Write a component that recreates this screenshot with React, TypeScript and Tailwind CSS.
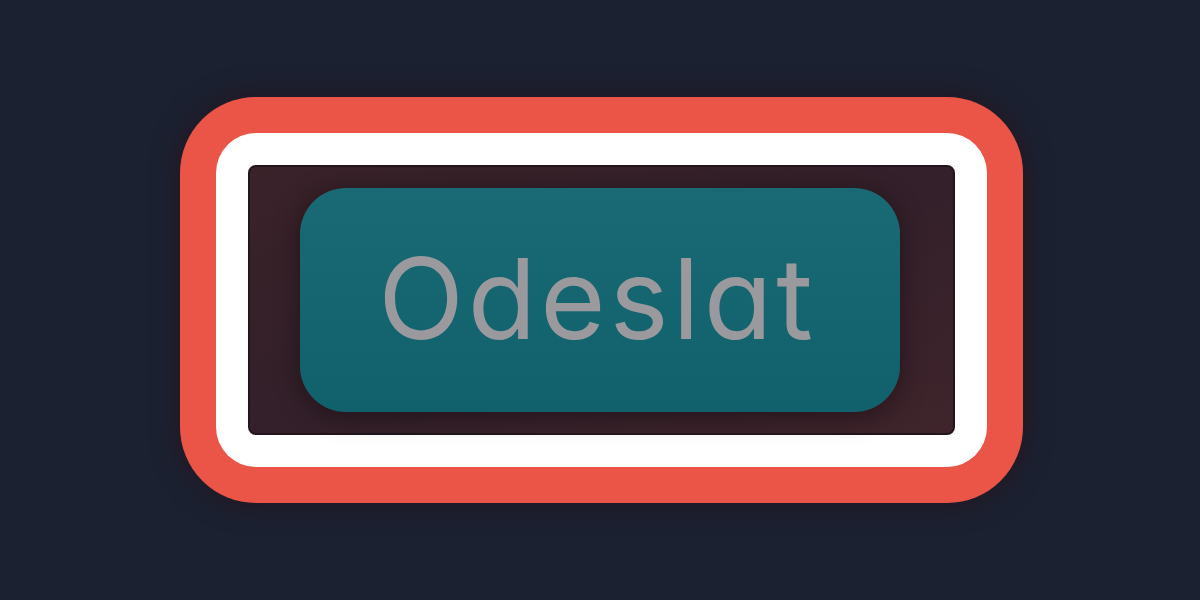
import React from "react";

export default function App() {
  return (
    <div className="flex h-[600px] w-[1200px] items-center justify-center bg-[#1b2131] pl-[2px]">
      <div className="rounded-[76px] bg-[#ea5548] p-[36px] shadow-[0_0_28px_rgba(40,20,30,0.9)]">
        <div className="rounded-[40px] bg-white p-[32px]">
          <div className="flex h-[270px] w-[707px] items-center justify-center rounded-[8px] border-2 border-[#22161c] bg-gradient-to-br from-[#3a2229] via-[#33202a] to-[#3f242b] pr-[3px]">
            <button
              className="flex h-[224px] w-[600px] items-center justify-center rounded-[46px] bg-gradient-to-b from-[#196a74] to-[#11616d] pb-[4px] pr-[4px] text-[112px] leading-none text-[#9a9a9e] tracking-[0.035em] shadow-[0_4px_24px_rgba(20,10,15,0.55)] [font-feature-settings:'cv11','ss01'] [font-family:Inter,'Noto_Sans',sans-serif]"
            >
              Odeslat
            </button>
          </div>
        </div>
      </div>
    </div>
  );
}
